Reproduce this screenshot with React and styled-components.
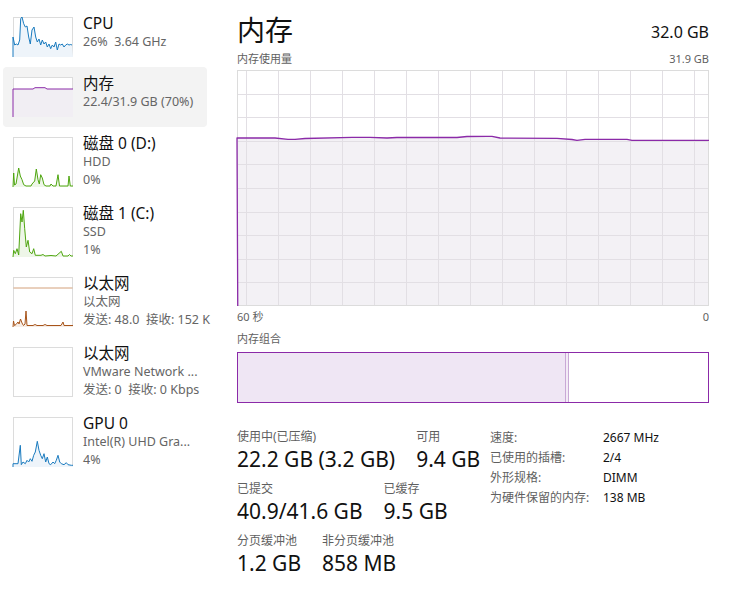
import React from 'react'
import styled, { createGlobalStyle } from 'styled-components'

const GlobalStyle = createGlobalStyle`
	html, body {
		margin: 0;
		padding: 0;
		background: #ffffff;
	}
	body {
		font-family: "Noto Sans", "Noto Sans CJK SC", sans-serif;
		color: #1a1a1a;
	}
`

const Window = styled.div`
	display: flex;
	width: 733px;
	height: 596px;
	box-sizing: border-box;
	padding-top: 7px;
	padding-left: 3px;
	overflow: hidden;
`

const Sidebar = styled.div`
	display: flex;
	flex-direction: column;
	width: 204px;
`

const Item = styled.div`
	display: flex;
	align-items: flex-start;
	gap: 10px;
	padding: 10px;
	border-radius: 4px;
	background: ${(p) => (p.$active ? '#f3f3f3' : 'transparent')};
`

const Thumb = styled.svg`
	flex: none;
	display: block;
	width: 60px;
	height: ${(p) => p.$h}px;
	overflow: visible;
`

const ItemText = styled.div`
	display: flex;
	flex-direction: column;
	margin: -4px 0 -8px;
	min-width: 0;
`

const ItemTitle = styled.div`
	font-size: 15.5px;
	line-height: 20px;
	color: #111;
	white-space: nowrap;
`

const ItemSub = styled.div`
	font-size: 12.5px;
	line-height: 18px;
	color: #656565;
	white-space: pre;
`

const Main = styled.div`
	display: flex;
	flex-direction: column;
	width: 472px;
	margin-left: 30px;
	padding-top: 5px;
`

const Header = styled.div`
	display: flex;
	justify-content: space-between;
	align-items: center;
	height: 36px;
`

const Title = styled.div`
	font-size: 28px;
	line-height: 36px;
	color: #111;
`

const Total = styled.div`
	font-size: 16px;
	line-height: 20px;
	padding-top: 4px;
	color: #111;
`

const SmallRow = styled.div`
	display: flex;
	justify-content: space-between;
	margin-top: ${(p) => p.$mt || 0}px;
	font-size: 11px;
	line-height: 16px;
	color: #5f5f5f;
`

const Chart = styled.svg`
	display: block;
	width: 472px;
	height: 236px;
	margin-top: 3px;
	overflow: visible;
`

const Composition = styled.div`
	display: flex;
	height: 51px;
	margin-top: 5px;
	box-sizing: border-box;
	border: 1.5px solid #8b2aa8;
`

const InUse = styled.div`
	flex: none;
	background: #efe6f4;
	border-right: 1px solid #c9a9d6;
`

const Standby = styled.div`
	flex: none;
	width: 2px;
	background: #f3ecf6;
	border-right: 1px solid #c9a9d6;
`

const Stats = styled.div`
	display: flex;
	margin-top: 26px;
`

const StatsLeft = styled.div`
	display: flex;
	flex-direction: column;
	gap: 8px;
	width: 253px;
	flex: none;
`

const StatRow = styled.div`
	display: flex;
	gap: 21px;
`

const Stat = styled.div`
	display: flex;
	flex-direction: column;
`

const StatLabel = styled.div`
	font-size: 12px;
	line-height: 16px;
	color: #5f5f5f;
	white-space: nowrap;
`

const StatValue = styled.div`
	font-size: 21px;
	line-height: 28px;
	color: #111;
	white-space: nowrap;
`

const Props = styled.div`
	display: grid;
	grid-template-columns: 113px auto;
	grid-auto-rows: 20px;
	align-items: center;
	margin-top: -2px;
	font-size: 12px;
	color: #111;
`

const PropLabel = styled.div`
	color: #5f5f5f;
	white-space: nowrap;
`

const thumbs = {
	cpu: {
		h: 40, color: '#1a7bbf', fill: '#eef4fa',
		pts: [[0,20],[1.7,28],[3.3,27],[5,28],[6.7,23],[7.7,1.7],[9,0],[10.7,6.7],[12.3,10],[14,9],[15.7,20],[17.3,27],[19,13],[21,10],[22.7,20],[24.3,25],[26,22],[27.7,28],[29.3,23],[31,27],[32.7,25],[34.3,30],[36,27],[37.7,31.7],[39.3,28],[41,30],[42.7,25],[44.3,33],[46,27],[47.7,28],[49.3,27],[51,30],[52.7,28],[54.3,27],[56,28],[57.7,27.5],[59,28]],
	},
	mem: {
		h: 40, color: '#8b2aa8', fill: '#f1eef3',
		pts: [[0,12],[20,12],[22,10.7],[32,10.7],[34,12],[60,12]],
	},
	disk0: {
		h: 50, color: '#4ea60f', fill: '#eef6e8',
		pts: [[0,50],[0.7,36],[1.5,48],[3,47],[5.7,31],[7.3,39],[9,42.7],[10.7,47.7],[13,49],[18,49],[19,47],[21.7,44],[23.3,32],[25,42.7],[26.3,47],[27.7,37.7],[29.3,41],[31,47.7],[33,49],[37,49],[38,47],[40,49],[43,49],[45,37.7],[46.5,49],[55,49],[56,39],[57.3,49],[60,49]],
	},
	disk1: {
		h: 50, color: '#4ea60f', fill: '#eef6e8',
		pts: [[0,50],[0.7,43.3],[2.3,46.7],[4,41.7],[5.7,48],[7.7,6.7],[9,15],[10.3,3.3],[11.7,21.7],[13.3,40],[15,33.3],[16.7,45],[19,46.7],[20.7,41.7],[22.3,48.3],[28,48.3],[30,47.5],[32,49],[38,48.5],[43,49],[48.3,44.3],[50,49],[55,49],[56.5,47.5],[58,49],[60,49]],
	},
	eth: {
		h: 50, color: '#a7541a', fill: '#f6ede6', ref: 11,
		pts: [[0,50],[0.5,44],[1.5,48.5],[3,47.5],[5,45],[6,47],[7.5,42],[9,46],[10.5,48.5],[12,47],[13,34],[14,48.5],[20,48.5],[22,47.5],[24,48.5],[30,48.5],[32,47.5],[34,48.5],[48,48.5],[50,45],[51,48.5],[60,48.5]],
	},
	vm: { h: 50, pts: null },
	gpu: {
		h: 50, color: '#1a7bbf', fill: '#eef4fa',
		pts: [[0,46.7],[5,46.7],[7.3,28.3],[8.3,47.7],[10,45],[12.3,46.7],[14,43.3],[15.7,45],[17.3,41.7],[19,44.3],[20.7,38.3],[22.3,35],[24.3,24.3],[26,33.3],[27.7,38.3],[29.3,41.7],[31,36.7],[32.7,45],[34.3,40],[36,46.7],[37.7,47.7],[40,45],[41.7,46.7],[43.3,43.3],[45,38.3],[46.7,45],[48.3,46.7],[51,47.7],[53.3,45.7],[55,47.7],[58.3,48.3],[60,48.3]],
	},
}

const MiniGraph = ({ kind }) => {
	const t = thumbs[kind]
	const line = t.pts ? t.pts.map((p) => p.join(',')).join(' ') : ''
	const area = t.pts ? `0,${t.h} ${line} 60,${t.h}` : ''
	return (
		<Thumb $h={t.h} viewBox={`0 0 60 ${t.h}`}>
			<rect x="0.5" y="0.5" width="59" height={t.h - 1} fill="#fff" stroke="#dcdcdc" strokeWidth="1" />
			{t.ref && <line x1="0.5" x2="59.5" y1={t.ref} y2={t.ref} stroke="#d3a07a" strokeWidth="1" />}
			{t.pts && <polygon points={area} fill={t.fill} />}
			{t.pts && <polyline points={`0,${t.h} ${line}`} fill="none" stroke={t.color} strokeWidth="1" strokeLinejoin="round" />}
		</Thumb>
	)
}

const sideItems = [
	{ kind: 'cpu', title: 'CPU', lines: ['26%  3.64 GHz'] },
	{ kind: 'mem', title: '内存', lines: ['22.4/31.9 GB (70%)'], active: true },
	{ kind: 'disk0', title: '磁盘 0 (D:)', lines: ['HDD', '0%'] },
	{ kind: 'disk1', title: '磁盘 1 (C:)', lines: ['SSD', '1%'] },
	{ kind: 'eth', title: '以太网', lines: ['以太网', '发送: 48.0  接收: 152 K'] },
	{ kind: 'vm', title: '以太网', lines: ['VMware Network ...', '发送: 0  接收: 0 Kbps'] },
	{ kind: 'gpu', title: 'GPU 0', lines: ['Intel(R) UHD Gra...', '4%'] },
]

const usage = [[0,68],[38,68],[51,69.3],[58,69.3],[68,68.5],[115,67.3],[133,67.3],[150,68],[160,67.5],[220,67.5],[230,66.5],[250,66.3],[255,66.3],[263,68],[320,68.3],[335,69.5],[340,70.3],[348,69.3],[390,69.3],[395,70.3],[472,70.3]]

const MemoryChart = () => {
	const W = 472
	const H = 236
	const vLines = []
	for (let x = 9; x < W; x += 32) vLines.push(x)
	const hLines = []
	for (let i = 1; i < 10; i++) hLines.push(Math.round(i * H / 10) + 0.5)
	const line = usage.map((p) => p.join(',')).join(' ')
	return (
		<Chart viewBox={`0 0 ${W} ${H}`}>
			<rect x="0.5" y="0.5" width={W - 1} height={H - 1} fill="#fff" />
			<polygon points={`0,${H} ${line} ${W},${H}`} fill="#f3f1f5" />
			{vLines.map((x) => <line key={'v' + x} x1={x + 0.5} x2={x + 0.5} y1="0" y2={H} stroke="#e2dfe4" strokeWidth="1" />)}
			{hLines.map((y) => <line key={'h' + y} x1="0" x2={W} y1={y} y2={y} stroke="#e2dfe4" strokeWidth="1" />)}
			<rect x="0.5" y="0.5" width={W - 1} height={H - 1} fill="none" stroke="#dcdcdc" strokeWidth="1" />
			<polyline points={`0.75,${H} ${line}`} fill="none" stroke="#8b2aa8" strokeWidth="1.3" strokeLinejoin="round" />
		</Chart>
	)
}

const App = () => {
	return (
		<Window>
			<GlobalStyle />
			<Sidebar>
				{sideItems.map((it, i) => (
					<Item key={i} $active={it.active}>
						<MiniGraph kind={it.kind} />
						<ItemText>
							<ItemTitle>{it.title}</ItemTitle>
							{it.lines.map((l, j) => <ItemSub key={j}>{l}</ItemSub>)}
						</ItemText>
					</Item>
				))}
			</Sidebar>

			<Main>
				<Header>
					<Title>内存</Title>
					<Total>32.0 GB</Total>
				</Header>
				<SmallRow $mt={3}>
					<span>内存使用量</span>
					<span>31.9 GB</span>
				</SmallRow>

				<MemoryChart />

				<SmallRow $mt={3}>
					<span>60 秒</span>
					<span>0</span>
				</SmallRow>
				<SmallRow $mt={6}>
					<span>内存组合</span>
				</SmallRow>

				<Composition>
					<InUse style={{ width: '69.6%' }} />
					<Standby />
				</Composition>

				<Stats>
					<StatsLeft>
						<StatRow>
							<Stat>
								<StatLabel>使用中(已压缩)</StatLabel>
								<StatValue>22.2 GB (3.2 GB)</StatValue>
							</Stat>
							<Stat>
								<StatLabel>可用</StatLabel>
								<StatValue>9.4 GB</StatValue>
							</Stat>
						</StatRow>
						<StatRow>
							<Stat>
								<StatLabel>已提交</StatLabel>
								<StatValue>40.9/41.6 GB</StatValue>
							</Stat>
							<Stat>
								<StatLabel>已缓存</StatLabel>
								<StatValue>9.5 GB</StatValue>
							</Stat>
						</StatRow>
						<StatRow>
							<Stat>
								<StatLabel>分页缓冲池</StatLabel>
								<StatValue>1.2 GB</StatValue>
							</Stat>
							<Stat>
								<StatLabel>非分页缓冲池</StatLabel>
								<StatValue>858 MB</StatValue>
							</Stat>
						</StatRow>
					</StatsLeft>

					<Props>
						<PropLabel>速度:</PropLabel>
						<div>2667 MHz</div>
						<PropLabel>已使用的插槽:</PropLabel>
						<div>2/4</div>
						<PropLabel>外形规格:</PropLabel>
						<div>DIMM</div>
						<PropLabel>为硬件保留的内存:</PropLabel>
						<div>138 MB</div>
					</Props>
				</Stats>
			</Main>
		</Window>
	)
}

export default App
